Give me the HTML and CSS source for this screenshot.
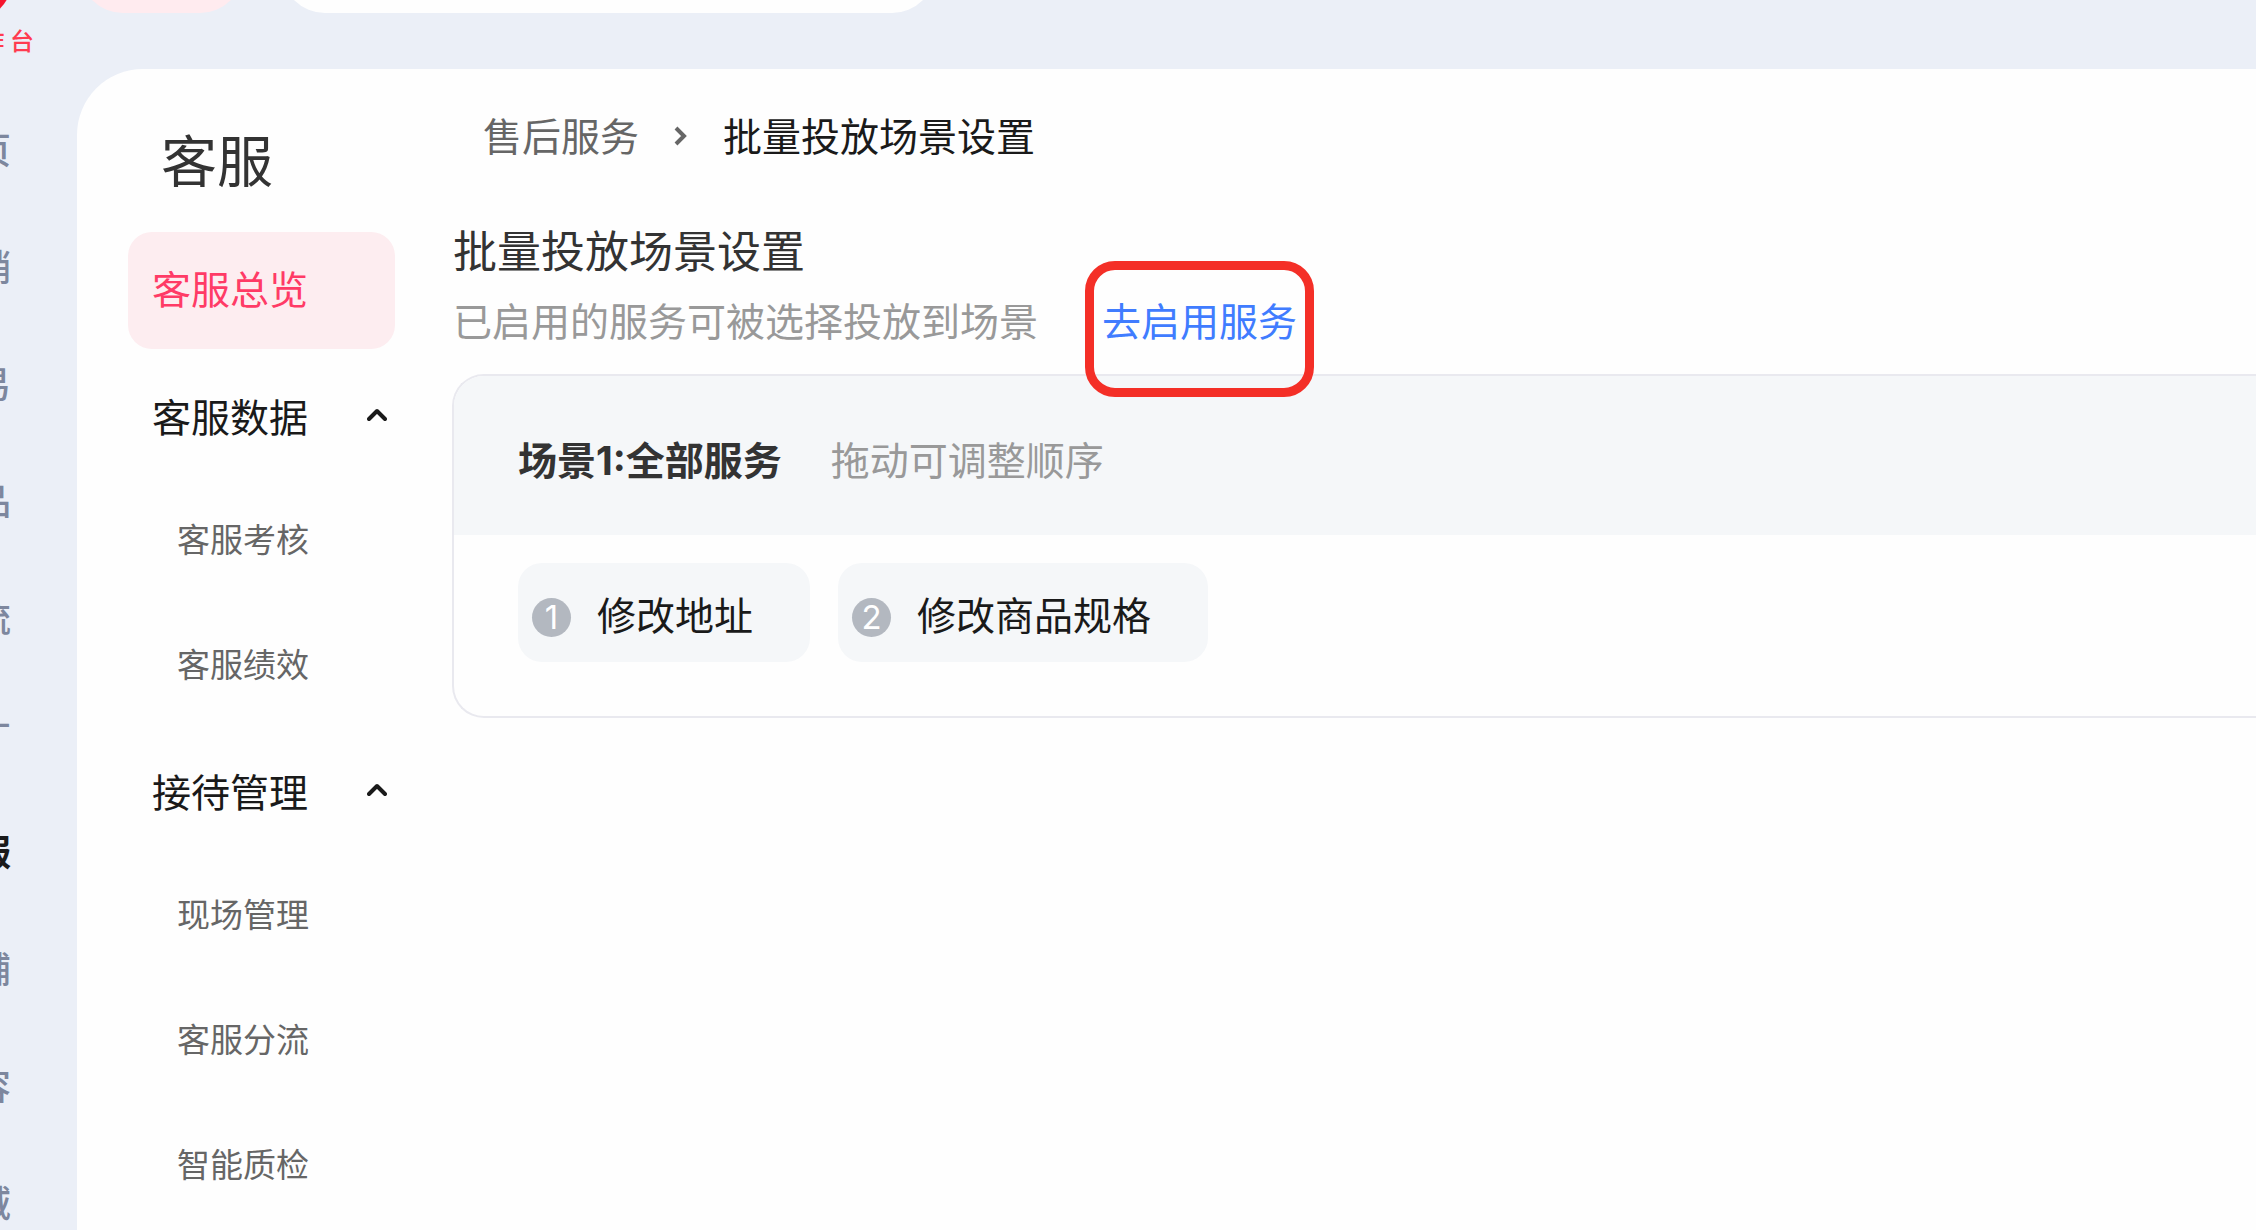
FILE: index.html
```html
<!DOCTYPE html>
<html lang="zh-CN">
<head>
    <meta charset="UTF-8">
    <meta name="viewport" content="width=device-width, initial-scale=1.0">
    <title>批量投放场景设置</title>
    <link rel="stylesheet" href="styles.css">
</head>
<body>

<div class="app">
    <nav class="rail">
        <svg class="logo" width="70" height="18" viewBox="0 0 70 18">
            <circle cx="35" cy="-17" r="35" fill="#f5142d" />
        </svg>
        <span class="logo-text">工 作 台</span>
        <a href="#">首页</a>
        <a href="#">营销</a>
        <a href="#">交易</a>
        <a href="#">商品</a>
        <a href="#">物流</a>
        <a href="#">推广</a>
        <a href="#" class="current">客服</a>
        <a href="#">店铺</a>
        <a href="#">内容</a>
        <a href="#">私域</a>
    </nav>

    <div class="page">
        <header class="topbar">
            <button class="shop-button" type="button" aria-label="店铺"></button>
            <input class="search" type="search" aria-label="搜索">
        </header>

        <div class="panel">
            <aside class="sidebar">
                <h1>客服</h1>
                <a href="#" class="overview">客服总览</a>

                <div class="group">
                    <button class="group-title" type="button">
                        客服数据
                        <svg width="20" height="14" viewBox="0 0 20 14" fill="none" stroke="#1a1a1a" stroke-width="4">
                            <path d="M2 11L10 3L18 11" stroke-linejoin="round" stroke-linecap="round" />
                        </svg>
                    </button>
                    <a href="#">客服考核</a>
                    <a href="#">客服绩效</a>
                </div>

                <div class="group">
                    <button class="group-title" type="button">
                        接待管理
                        <svg width="20" height="14" viewBox="0 0 20 14" fill="none" stroke="#1a1a1a" stroke-width="4">
                            <path d="M2 11L10 3L18 11" stroke-linejoin="round" stroke-linecap="round" />
                        </svg>
                    </button>
                    <a href="#">现场管理</a>
                    <a href="#">客服分流</a>
                    <a href="#">智能质检</a>
                </div>
            </aside>

            <main class="content">
                <nav class="breadcrumb">
                    <a href="#">售后服务</a>
                    <svg width="14" height="24" viewBox="0 0 14 24" fill="none" stroke="#666" stroke-width="4">
                        <path d="M2 6L10 14L2 22" />
                    </svg>
                    <span>批量投放场景设置</span>
                </nav>

                <h2>批量投放场景设置</h2>
                <div class="intro">
                    <span>已启用的服务可被选择投放到场景</span>
                    <a href="#" class="enable-link">去启用服务</a>
                </div>

                <section class="card">
                    <div class="card-head">
                        <h3>场景1:全部服务</h3>
                        <span>拖动可调整顺序</span>
                    </div>
                    <div class="card-body">
                        <div class="tag"><span class="num">1</span>修改地址</div>
                        <div class="tag"><span class="num">2</span>修改商品规格</div>
                    </div>
                </section>
            </main>
        </div>
    </div>
</div>

</body>
</html>
```
FILE: styles.css
```css
* {
    box-sizing: border-box;
}
body {
    margin: 0;
    font-family: "Noto Sans CJK SC", sans-serif;
    font-size: 39px;
    line-height: 60px;
    color: #1a1a1a;
    background-color: #ebeff7;
}
a {
    color: inherit;
    text-decoration: none;
}
button {
    font: inherit;
    color: inherit;
    border: none;
    background: none;
    cursor: pointer;
}
h1, h2, h3 {
    margin: 0;
    font-weight: 400;
}
.app {
    display: flex;
    height: 100vh;
    overflow: hidden;
}

/* left rail */
.rail {
    display: flex;
    flex-direction: column;
    align-items: flex-end;
    flex: none;
    width: 77px;
    padding-right: 66px;
    color: #7d879e;
    font-size: 36px;
    font-weight: 500;
    white-space: nowrap;
}
.rail a {
    flex: none;
    line-height: 117px;
}
.rail .current {
    color: #1a1a1a;
    font-weight: 700;
}
.logo {
    flex: none;
}
.logo-text {
    margin: 10px -23px 38px 0;
    font-size: 24px;
    line-height: 24px;
    color: #ff3b50;
}

/* top bar */
.page {
    flex: 1;
    min-width: 0;
    display: flex;
    flex-direction: column;
}
.topbar {
    display: flex;
    align-items: flex-end;
    gap: 39px;
    flex: none;
    height: 69px;
    padding: 0 0 56px 3px;
}
.shop-button {
    flex: none;
    width: 163px;
    height: 86px;
    border-radius: 43px;
    background-color: #ffebef;
}
.search {
    flex: none;
    width: 30%;
    height: 86px;
    padding: 0 43px;
    border: none;
    border-radius: 43px;
    font: inherit;
    background-color: #fefefe;
}
.panel {
    flex: 1;
    display: flex;
    border-top-left-radius: 66px;
    background-color: #fefefe;
}

/* sidebar */
.sidebar {
    flex: none;
    width: 375px;
    padding: 49px 57px 0 51px;
}
.sidebar h1 {
    margin-bottom: 34px;
    padding-left: 33px;
    font-size: 56px;
    line-height: 80px;
    color: #333;
}
.overview {
    display: block;
    height: 117px;
    margin-bottom: 6px;
    padding-left: 24px;
    border-radius: 24px;
    line-height: 110px;
    color: #ff3b66;
    background-color: #fdedf0;
}
.group {
    margin-bottom: 4px;
}
.group-title {
    display: flex;
    align-items: center;
    justify-content: space-between;
    width: 100%;
    height: 121px;
    padding: 0 8px 2px 24px;
}
.group a {
    display: block;
    padding-left: 49px;
    font-size: 33px;
    line-height: 125px;
    color: #666;
}

/* content */
.content {
    flex: 1;
    min-width: 0;
    padding-top: 35px;
}
.breadcrumb {
    display: flex;
    align-items: center;
    gap: 35px;
    margin-bottom: 55px;
    padding-left: 31px;
}
.breadcrumb a {
    color: #666;
}
.content h2 {
    margin-bottom: 10px;
    padding-left: 1px;
    font-size: 44px;
    color: #333;
}
.intro {
    display: flex;
    gap: 64px;
    margin-bottom: 25px;
    padding-left: 1px;
    color: #999;
}
.enable-link {
    position: relative;
    color: #407cff;
}
/* red frame round the link, lies over the card edge */
.enable-link::after {
    content: "";
    position: absolute;
    top: -28px;
    left: -17px;
    right: -17px;
    height: 136px;
    box-sizing: border-box;
    border: 9px solid #f42f27;
    border-radius: 30px;
}
.card {
    border: 2px solid #e9e9ef;
    border-right: none;
    border-radius: 32px 0 0 32px;
    overflow: hidden;
}
.card-head {
    display: flex;
    align-items: baseline;
    gap: 49px;
    padding: 52px 64px 44px;
    color: #999;
    background-color: #f5f7f9;
}
.card-head h3 {
    font-family: Inter, "Noto Sans CJK SC", sans-serif;
    font-size: 39px;
    font-weight: 700;
    color: #333;
}
.card-body {
    display: flex;
    gap: 28px;
    padding: 28px 64px 54px;
}
.tag {
    display: flex;
    align-items: center;
    height: 99px;
    padding: 0 57px 0 14px;
    border-radius: 24px;
    background-color: #f5f7f9;
}
.num {
    width: 39px;
    height: 39px;
    margin: 10px 26px 0 0;
    border-radius: 50%;
    font-family: Inter, sans-serif;
    font-size: 33px;
    line-height: 39px;
    text-align: center;
    color: #fff;
    background-color: #b3b8c0;
}
```
